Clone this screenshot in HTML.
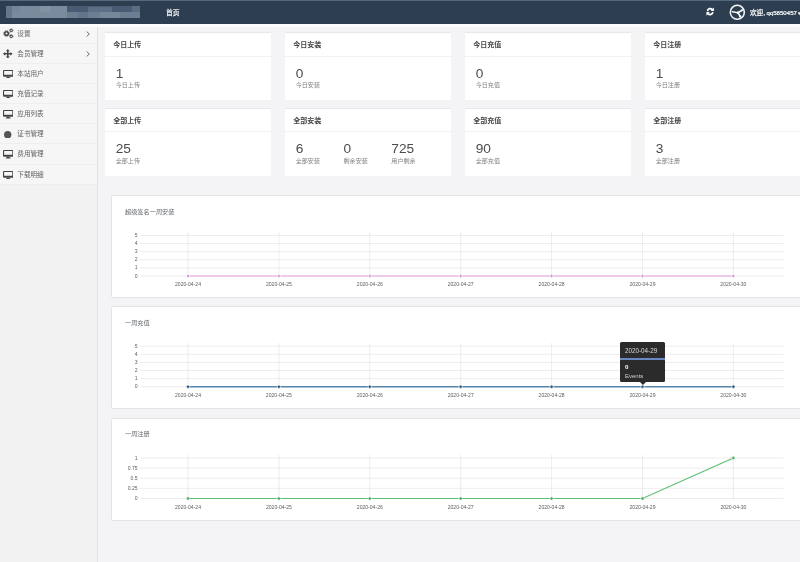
<!DOCTYPE html><html lang="zh"><head><meta charset="utf-8"><title>首页</title><style>
html,body{margin:0;padding:0;}
body{width:800px;height:562px;overflow:hidden;background:#f4f4f6;font-family:"Liberation Sans", "Noto Sans CJK SC", sans-serif;position:relative;}
.abs{position:absolute;}
#wrap{position:absolute;left:0;top:0;width:800px;height:562px;overflow:hidden;will-change:transform;}
#hdr{left:0;top:0;width:800px;height:23.6px;background:#2c3e50;}
#side{left:0;top:24px;width:98px;height:538px;background:#f2f2f2;border-right:1px solid #e1e1e1;box-sizing:border-box;}
.si{position:absolute;left:0;width:97px;height:20.15px;border-bottom:1px solid #eeeeee;box-sizing:border-box;background:#f6f6f6;}
.si span{position:absolute;left:17.3px;top:0;line-height:19px;font-size:6.6px;color:#646464;white-space:nowrap;}
.si svg{position:absolute;}
.card{position:absolute;background:#fff;border-radius:1px;}
.card .tb{position:absolute;left:0;right:0;top:-0.9px;height:1px;background:#e6e8ea;}
.card .t{position:absolute;left:8.3px;top:0;height:23.8px;line-height:23.8px;font-size:7px;font-weight:bold;color:#464646;white-space:nowrap;}
.card .ln{position:absolute;left:0;right:0;top:22.7px;height:1px;background:#f1f1f1;}
.card .n{position:absolute;font-size:13.7px;line-height:14px;color:#4c4c4c;white-space:nowrap;}
.card .l{position:absolute;font-size:6.1px;line-height:8px;color:#808080;white-space:nowrap;}
.panel{position:absolute;left:112px;width:700px;background:#fff;box-shadow:0 0 0 1px #e4e4e5;border-radius:1px;}
.panel .pt{position:absolute;left:13px;font-size:6.2px;color:#666b70;line-height:8px;white-space:nowrap;}
svg text{font-family:"Liberation Sans", "Noto Sans CJK SC", sans-serif;}
</style></head><body>
<div id="wrap">
<div id="hdr" class="abs">
<div class="abs" style="left:6px;top:6.2px;width:60.5px;height:12px;background:#7a8b9d;"></div>
<div class="abs" style="left:6px;top:6.2px;width:6px;height:12px;background:#64778b;"></div>
<div class="abs" style="left:12px;top:6.2px;width:8px;height:6px;background:#74869a;"></div>
<div class="abs" style="left:40px;top:6.2px;width:10px;height:6px;background:#8292a3;"></div>
<div class="abs" style="left:66.5px;top:12px;width:73.5px;height:6.2px;background:#6c7e91;"></div>
<div class="abs" style="left:66.5px;top:6.2px;width:73.5px;height:5.8px;background:#485b72;"></div>
<div class="abs" style="left:88px;top:7px;width:24px;height:5px;background:#5c6f84;"></div>
<div class="abs" style="left:100px;top:12px;width:20px;height:6.2px;background:#76879a;"></div>
<div class="abs" style="left:132px;top:6.2px;width:8px;height:5.8px;background:#5a6d82;"></div>
<div class="abs" style="left:78px;top:12px;width:10px;height:6.2px;background:#62758a;"></div>
<div class="abs" style="left:0;top:0;width:800px;height:0.8px;background:#56687c;"></div>
<div class="abs" style="left:0;top:23.6px;width:800px;height:3px;background:#fbfcfb;z-index:5;"></div>
<div class="abs" style="left:166px;top:0.6px;line-height:24px;font-size:6.8px;color:#fff;white-space:nowrap;-webkit-text-stroke:0.2px #fff;">首页</div>
<svg class="abs" style="left:706.4px;top:7.1px" width="8.4" height="9.2" viewBox="0 0 18 18" preserveAspectRatio="none"><g fill="none" stroke="#fff" stroke-width="3.6"><path d="M3.2 8 A6 6 0 0 1 13.6 5.2"/><path d="M14.8 10 A6 6 0 0 1 4.4 12.8"/></g><path d="M17 1 V8 H10 Z" fill="#fff"/><path d="M1 17 V10 H8 Z" fill="#fff"/></svg>
<svg class="abs" style="left:728.9px;top:4.4px" width="16.6" height="16.6" viewBox="0 0 33.2 33.2"><circle cx="16.6" cy="16.6" r="14" fill="#2c3e50" stroke="#f4f6f8" stroke-width="3"/><g stroke="#f4f6f8" stroke-width="3" stroke-linecap="round" fill="#f4f6f8"><line x1="6.5" y1="15.5" x2="18" y2="17.5"/><line x1="18" y1="17.5" x2="26" y2="12.5"/><line x1="18" y1="17.5" x2="22.5" y2="25"/><circle cx="18" cy="17.5" r="2.6" stroke="none"/><circle cx="22.5" cy="25" r="2.4" stroke="none"/><circle cx="26" cy="12.5" r="2" stroke="none"/></g></svg>
<div class="abs" style="left:750px;top:0.6px;line-height:24.5px;font-size:6.6px;color:#fff;white-space:nowrap;-webkit-text-stroke:0.2px #fff;">欢迎,<span style="font-size:6.1px;margin-left:1.4px">qq5850457</span><span style="font-size:5px;margin-left:0.8px">&#9662;</span></div>
</div>
<div id="side" class="abs">
<div class="si" style="top:-0.50px"><svg style="left:2.8px;top:4.6px" width="11" height="10.5" viewBox="0 0 22 21"><circle cx="7" cy="11" r="5.6" fill="none" stroke="#444" stroke-width="2" stroke-dasharray="2.2 2.2"/><circle cx="7" cy="11" r="3.6" fill="none" stroke="#444" stroke-width="3"/><circle cx="16.5" cy="4.8" r="2.3" fill="none" stroke="#555" stroke-width="2.2"/><circle cx="16.5" cy="4.8" r="3.6" fill="none" stroke="#555" stroke-width="1.2" stroke-dasharray="1.4 1.4"/><circle cx="16.5" cy="16.6" r="2.3" fill="none" stroke="#555" stroke-width="2.2"/><circle cx="16.5" cy="16.6" r="3.6" fill="none" stroke="#555" stroke-width="1.2" stroke-dasharray="1.4 1.4"/></svg><span>设置</span>
<svg style="left:85.5px;top:7px" width="4" height="6" viewBox="0 0 8 12"><path d="M1.5 1 L6.5 6 L1.5 11" fill="none" stroke="#606060" stroke-width="1.9"/></svg>
</div>
<div class="si" style="top:19.65px"><svg style="left:3.2px;top:5px" width="9.6" height="9.6" viewBox="0 0 18 18"><path d="M9 0 L12.6 4 H10.4 V7.6 H14 V5.4 L18 9 L14 12.6 V10.4 H10.4 V14 H12.6 L9 18 L5.4 14 H7.6 V10.4 H4 V12.6 L0 9 L4 5.4 V7.6 H7.6 V4 H5.4 Z" fill="#444"/></svg><span>会员管理</span>
<svg style="left:85.5px;top:7px" width="4" height="6" viewBox="0 0 8 12"><path d="M1.5 1 L6.5 6 L1.5 11" fill="none" stroke="#606060" stroke-width="1.9"/></svg>
</div>
<div class="si" style="top:39.80px"><svg style="left:2.9px;top:6.1px" width="10.4" height="8.4" viewBox="0 0 20.8 16.8"><path d="M2 0 H18.8 A2 2 0 0 1 20.8 2 V11.6 A2 2 0 0 1 18.8 13.6 H2 A2 2 0 0 1 0 11.6 V2 A2 2 0 0 1 2 0 Z M2.2 2 V9.4 H18.6 V2 Z" fill="#444" fill-rule="evenodd"/><path d="M8.2 13.4 H12.6 L13.2 15.2 H15 V16.8 H5.8 V15.2 H7.6 Z" fill="#444"/></svg><span>本站用户</span>
</div>
<div class="si" style="top:59.95px"><svg style="left:2.9px;top:6.1px" width="10.4" height="8.4" viewBox="0 0 20.8 16.8"><path d="M2 0 H18.8 A2 2 0 0 1 20.8 2 V11.6 A2 2 0 0 1 18.8 13.6 H2 A2 2 0 0 1 0 11.6 V2 A2 2 0 0 1 2 0 Z M2.2 2 V9.4 H18.6 V2 Z" fill="#444" fill-rule="evenodd"/><path d="M8.2 13.4 H12.6 L13.2 15.2 H15 V16.8 H5.8 V15.2 H7.6 Z" fill="#444"/></svg><span>充值记录</span>
</div>
<div class="si" style="top:80.10px"><svg style="left:2.9px;top:6.1px" width="10.4" height="8.4" viewBox="0 0 20.8 16.8"><path d="M2 0 H18.8 A2 2 0 0 1 20.8 2 V11.6 A2 2 0 0 1 18.8 13.6 H2 A2 2 0 0 1 0 11.6 V2 A2 2 0 0 1 2 0 Z M2.2 2 V9.4 H18.6 V2 Z" fill="#444" fill-rule="evenodd"/><path d="M8.2 13.4 H12.6 L13.2 15.2 H15 V16.8 H5.8 V15.2 H7.6 Z" fill="#444"/></svg><span>应用列表</span>
</div>
<div class="si" style="top:100.25px"><svg style="left:4.4px;top:6.6px" width="7.4" height="7.4" viewBox="0 0 14 14"><circle cx="7" cy="7" r="7" fill="#555"/></svg><span>证书管理</span>
</div>
<div class="si" style="top:120.40px"><svg style="left:2.9px;top:6.1px" width="10.4" height="8.4" viewBox="0 0 20.8 16.8"><path d="M2 0 H18.8 A2 2 0 0 1 20.8 2 V11.6 A2 2 0 0 1 18.8 13.6 H2 A2 2 0 0 1 0 11.6 V2 A2 2 0 0 1 2 0 Z M2.2 2 V9.4 H18.6 V2 Z" fill="#444" fill-rule="evenodd"/><path d="M8.2 13.4 H12.6 L13.2 15.2 H15 V16.8 H5.8 V15.2 H7.6 Z" fill="#444"/></svg><span>费用管理</span>
</div>
<div class="si" style="top:140.55px"><svg style="left:2.9px;top:6.1px" width="10.4" height="8.4" viewBox="0 0 20.8 16.8"><path d="M2 0 H18.8 A2 2 0 0 1 20.8 2 V11.6 A2 2 0 0 1 18.8 13.6 H2 A2 2 0 0 1 0 11.6 V2 A2 2 0 0 1 2 0 Z M2.2 2 V9.4 H18.6 V2 Z" fill="#444" fill-rule="evenodd"/><path d="M8.2 13.4 H12.6 L13.2 15.2 H15 V16.8 H5.8 V15.2 H7.6 Z" fill="#444"/></svg><span>下载明细</span>
</div>
</div>
<div class="card" style="left:105px;top:33.1px;width:165.5px;height:67.0px"><div class="tb"></div><div class="t">今日上传</div><div class="ln"></div>
<div class="n" style="left:10.7px;top:33.6px">1</div><div class="l" style="left:10.7px;top:48.2px">今日上传</div>
</div>
<div class="card" style="left:285px;top:33.1px;width:165.5px;height:67.0px"><div class="tb"></div><div class="t">今日安装</div><div class="ln"></div>
<div class="n" style="left:10.7px;top:33.6px">0</div><div class="l" style="left:10.7px;top:48.2px">今日安装</div>
</div>
<div class="card" style="left:465px;top:33.1px;width:165.5px;height:67.0px"><div class="tb"></div><div class="t">今日充值</div><div class="ln"></div>
<div class="n" style="left:10.7px;top:33.6px">0</div><div class="l" style="left:10.7px;top:48.2px">今日充值</div>
</div>
<div class="card" style="left:645px;top:33.1px;width:165.5px;height:67.0px"><div class="tb"></div><div class="t">今日注册</div><div class="ln"></div>
<div class="n" style="left:10.7px;top:33.6px">1</div><div class="l" style="left:10.7px;top:48.2px">今日注册</div>
</div>
<div class="card" style="left:105px;top:108.8px;width:165.5px;height:66.9px"><div class="tb"></div><div class="t">全部上传</div><div class="ln"></div>
<div class="n" style="left:10.7px;top:33.6px">25</div><div class="l" style="left:10.7px;top:48.2px">全部上传</div>
</div>
<div class="card" style="left:285px;top:108.8px;width:165.5px;height:66.9px"><div class="tb"></div><div class="t">全部安装</div><div class="ln"></div>
<div class="n" style="left:10.7px;top:33.6px">6</div><div class="l" style="left:10.7px;top:48.2px">全部安装</div>
<div class="n" style="left:58.5px;top:33.6px">0</div><div class="l" style="left:58.5px;top:48.2px">剩余安装</div>
<div class="n" style="left:106.3px;top:33.6px">725</div><div class="l" style="left:106.3px;top:48.2px">用户剩余</div>
</div>
<div class="card" style="left:465px;top:108.8px;width:165.5px;height:66.9px"><div class="tb"></div><div class="t">全部充值</div><div class="ln"></div>
<div class="n" style="left:10.7px;top:33.6px">90</div><div class="l" style="left:10.7px;top:48.2px">全部充值</div>
</div>
<div class="card" style="left:645px;top:108.8px;width:165.5px;height:66.9px"><div class="tb"></div><div class="t">全部注册</div><div class="ln"></div>
<div class="n" style="left:10.7px;top:33.6px">3</div><div class="l" style="left:10.7px;top:48.2px">全部注册</div>
</div>
<div class="panel" style="top:195.8px;height:101.20px"><div class="pt" style="top:12.00px">超级签名一周安装</div><svg class="abs" style="left:0;top:0" width="700" height="101.20" viewBox="0 0 700 101.20"><line x1="28" y1="39.45" x2="671.6" y2="39.45" stroke="#e0e0e0" stroke-width="0.6"/><text x="25.6" y="41.05" font-size="5.1" fill="#5c5f5a" text-anchor="end">5</text><line x1="28" y1="47.56" x2="671.6" y2="47.56" stroke="#e0e0e0" stroke-width="0.6"/><text x="25.6" y="49.16" font-size="5.1" fill="#5c5f5a" text-anchor="end">4</text><line x1="28" y1="55.67" x2="671.6" y2="55.67" stroke="#e0e0e0" stroke-width="0.6"/><text x="25.6" y="57.27" font-size="5.1" fill="#5c5f5a" text-anchor="end">3</text><line x1="28" y1="63.78" x2="671.6" y2="63.78" stroke="#e0e0e0" stroke-width="0.6"/><text x="25.6" y="65.38" font-size="5.1" fill="#5c5f5a" text-anchor="end">2</text><line x1="28" y1="71.89" x2="671.6" y2="71.89" stroke="#e0e0e0" stroke-width="0.6"/><text x="25.6" y="73.49" font-size="5.1" fill="#5c5f5a" text-anchor="end">1</text><line x1="28" y1="80.00" x2="671.6" y2="80.00" stroke="#e0e0e0" stroke-width="0.6"/><text x="25.6" y="81.60" font-size="5.1" fill="#5c5f5a" text-anchor="end">0</text><line x1="76.00" y1="36.25" x2="76.00" y2="82.20" stroke="#e0e0e0" stroke-width="0.6"/><text x="76.00" y="90.20" font-size="5.1" fill="#5c5f5a" text-anchor="middle">2020-04-24</text><line x1="166.90" y1="36.25" x2="166.90" y2="82.20" stroke="#e0e0e0" stroke-width="0.6"/><text x="166.90" y="90.20" font-size="5.1" fill="#5c5f5a" text-anchor="middle">2020-04-25</text><line x1="257.80" y1="36.25" x2="257.80" y2="82.20" stroke="#e0e0e0" stroke-width="0.6"/><text x="257.80" y="90.20" font-size="5.1" fill="#5c5f5a" text-anchor="middle">2020-04-26</text><line x1="348.70" y1="36.25" x2="348.70" y2="82.20" stroke="#e0e0e0" stroke-width="0.6"/><text x="348.70" y="90.20" font-size="5.1" fill="#5c5f5a" text-anchor="middle">2020-04-27</text><line x1="439.60" y1="36.25" x2="439.60" y2="82.20" stroke="#e0e0e0" stroke-width="0.6"/><text x="439.60" y="90.20" font-size="5.1" fill="#5c5f5a" text-anchor="middle">2020-04-28</text><line x1="530.50" y1="36.25" x2="530.50" y2="82.20" stroke="#e0e0e0" stroke-width="0.6"/><text x="530.50" y="90.20" font-size="5.1" fill="#5c5f5a" text-anchor="middle">2020-04-29</text><line x1="621.40" y1="36.25" x2="621.40" y2="82.20" stroke="#e0e0e0" stroke-width="0.6"/><text x="621.40" y="90.20" font-size="5.1" fill="#5c5f5a" text-anchor="middle">2020-04-30</text><path d="M76.00 80.00 L166.90 80.00 L257.80 80.00 L348.70 80.00 L439.60 80.00 L530.50 80.00 L621.40 80.00" fill="none" stroke="#edbde6" stroke-width="1.3"/><circle cx="76.00" cy="80.00" r="1.5" fill="#c690c4" stroke="#fff" stroke-width="0.7"/><circle cx="166.90" cy="80.00" r="1.5" fill="#c690c4" stroke="#fff" stroke-width="0.7"/><circle cx="257.80" cy="80.00" r="1.5" fill="#c690c4" stroke="#fff" stroke-width="0.7"/><circle cx="348.70" cy="80.00" r="1.5" fill="#c690c4" stroke="#fff" stroke-width="0.7"/><circle cx="439.60" cy="80.00" r="1.5" fill="#c690c4" stroke="#fff" stroke-width="0.7"/><circle cx="530.50" cy="80.00" r="1.5" fill="#c690c4" stroke="#fff" stroke-width="0.7"/><circle cx="621.40" cy="80.00" r="1.5" fill="#c690c4" stroke="#fff" stroke-width="0.7"/></svg></div>
<div class="panel" style="top:307.3px;height:101.00px"><div class="pt" style="top:11.75px">一周充值</div><svg class="abs" style="left:0;top:0" width="700" height="101.00" viewBox="0 0 700 101.00"><line x1="28" y1="39.20" x2="671.6" y2="39.20" stroke="#e0e0e0" stroke-width="0.6"/><text x="25.6" y="40.80" font-size="5.1" fill="#5c5f5a" text-anchor="end">5</text><line x1="28" y1="47.31" x2="671.6" y2="47.31" stroke="#e0e0e0" stroke-width="0.6"/><text x="25.6" y="48.91" font-size="5.1" fill="#5c5f5a" text-anchor="end">4</text><line x1="28" y1="55.42" x2="671.6" y2="55.42" stroke="#e0e0e0" stroke-width="0.6"/><text x="25.6" y="57.02" font-size="5.1" fill="#5c5f5a" text-anchor="end">3</text><line x1="28" y1="63.53" x2="671.6" y2="63.53" stroke="#e0e0e0" stroke-width="0.6"/><text x="25.6" y="65.13" font-size="5.1" fill="#5c5f5a" text-anchor="end">2</text><line x1="28" y1="71.64" x2="671.6" y2="71.64" stroke="#e0e0e0" stroke-width="0.6"/><text x="25.6" y="73.24" font-size="5.1" fill="#5c5f5a" text-anchor="end">1</text><line x1="28" y1="79.75" x2="671.6" y2="79.75" stroke="#e0e0e0" stroke-width="0.6"/><text x="25.6" y="81.35" font-size="5.1" fill="#5c5f5a" text-anchor="end">0</text><line x1="76.00" y1="36.00" x2="76.00" y2="81.95" stroke="#e0e0e0" stroke-width="0.6"/><text x="76.00" y="89.95" font-size="5.1" fill="#5c5f5a" text-anchor="middle">2020-04-24</text><line x1="166.90" y1="36.00" x2="166.90" y2="81.95" stroke="#e0e0e0" stroke-width="0.6"/><text x="166.90" y="89.95" font-size="5.1" fill="#5c5f5a" text-anchor="middle">2020-04-25</text><line x1="257.80" y1="36.00" x2="257.80" y2="81.95" stroke="#e0e0e0" stroke-width="0.6"/><text x="257.80" y="89.95" font-size="5.1" fill="#5c5f5a" text-anchor="middle">2020-04-26</text><line x1="348.70" y1="36.00" x2="348.70" y2="81.95" stroke="#e0e0e0" stroke-width="0.6"/><text x="348.70" y="89.95" font-size="5.1" fill="#5c5f5a" text-anchor="middle">2020-04-27</text><line x1="439.60" y1="36.00" x2="439.60" y2="81.95" stroke="#e0e0e0" stroke-width="0.6"/><text x="439.60" y="89.95" font-size="5.1" fill="#5c5f5a" text-anchor="middle">2020-04-28</text><line x1="530.50" y1="36.00" x2="530.50" y2="81.95" stroke="#e0e0e0" stroke-width="0.6"/><text x="530.50" y="89.95" font-size="5.1" fill="#5c5f5a" text-anchor="middle">2020-04-29</text><line x1="621.40" y1="36.00" x2="621.40" y2="81.95" stroke="#e0e0e0" stroke-width="0.6"/><text x="621.40" y="89.95" font-size="5.1" fill="#5c5f5a" text-anchor="middle">2020-04-30</text><path d="M76.00 79.75 L166.90 79.75 L257.80 79.75 L348.70 79.75 L439.60 79.75 L530.50 79.75 L621.40 79.75" fill="none" stroke="#5585ab" stroke-width="1.4"/><circle cx="76.00" cy="79.75" r="1.7" fill="#2f5878" stroke="#fff" stroke-width="0.7"/><circle cx="166.90" cy="79.75" r="1.7" fill="#2f5878" stroke="#fff" stroke-width="0.7"/><circle cx="257.80" cy="79.75" r="1.7" fill="#2f5878" stroke="#fff" stroke-width="0.7"/><circle cx="348.70" cy="79.75" r="1.7" fill="#2f5878" stroke="#fff" stroke-width="0.7"/><circle cx="439.60" cy="79.75" r="1.7" fill="#2f5878" stroke="#fff" stroke-width="0.7"/><circle cx="530.50" cy="79.75" r="1.7" fill="#2f5878" stroke="#fff" stroke-width="0.7"/><circle cx="621.40" cy="79.75" r="1.7" fill="#2f5878" stroke="#fff" stroke-width="0.7"/></svg><div class="abs" style="left:508px;top:35.15px;width:45px;height:39.2px;background:#2b2b2b;border-radius:1.5px;"><div class="abs" style="left:5px;top:4.6px;font-size:6.3px;line-height:8px;color:#d8dbe2;white-space:nowrap;">2020-04-29</div><div class="abs" style="left:0;top:16px;width:45px;height:1.5px;background:#6a86c4;"></div><div class="abs" style="left:5px;top:20.3px;font-size:6.2px;line-height:8px;color:#fff;font-weight:bold;white-space:nowrap;">0</div><div class="abs" style="left:5px;top:29.3px;font-size:6px;line-height:8px;color:#d0d0d0;white-space:nowrap;">Events</div><div class="abs" style="left:19.5px;top:39.2px;width:0;height:0;border-left:3px solid transparent;border-right:3px solid transparent;border-top:3px solid #2b2b2b;"></div></div></div>
<div class="panel" style="top:418.6px;height:101.10px"><div class="pt" style="top:11.50px">一周注册</div><svg class="abs" style="left:0;top:0" width="700" height="101.10" viewBox="0 0 700 101.10"><line x1="28" y1="38.95" x2="671.6" y2="38.95" stroke="#e0e0e0" stroke-width="0.6"/><text x="25.6" y="40.55" font-size="5.1" fill="#5c5f5a" text-anchor="end">1</text><line x1="28" y1="49.09" x2="671.6" y2="49.09" stroke="#e0e0e0" stroke-width="0.6"/><text x="25.6" y="50.69" font-size="5.1" fill="#5c5f5a" text-anchor="end">0.75</text><line x1="28" y1="59.23" x2="671.6" y2="59.23" stroke="#e0e0e0" stroke-width="0.6"/><text x="25.6" y="60.83" font-size="5.1" fill="#5c5f5a" text-anchor="end">0.5</text><line x1="28" y1="69.36" x2="671.6" y2="69.36" stroke="#e0e0e0" stroke-width="0.6"/><text x="25.6" y="70.96" font-size="5.1" fill="#5c5f5a" text-anchor="end">0.25</text><line x1="28" y1="79.50" x2="671.6" y2="79.50" stroke="#e0e0e0" stroke-width="0.6"/><text x="25.6" y="81.10" font-size="5.1" fill="#5c5f5a" text-anchor="end">0</text><line x1="76.00" y1="35.75" x2="76.00" y2="81.70" stroke="#e0e0e0" stroke-width="0.6"/><text x="76.00" y="89.70" font-size="5.1" fill="#5c5f5a" text-anchor="middle">2020-04-24</text><line x1="166.90" y1="35.75" x2="166.90" y2="81.70" stroke="#e0e0e0" stroke-width="0.6"/><text x="166.90" y="89.70" font-size="5.1" fill="#5c5f5a" text-anchor="middle">2020-04-25</text><line x1="257.80" y1="35.75" x2="257.80" y2="81.70" stroke="#e0e0e0" stroke-width="0.6"/><text x="257.80" y="89.70" font-size="5.1" fill="#5c5f5a" text-anchor="middle">2020-04-26</text><line x1="348.70" y1="35.75" x2="348.70" y2="81.70" stroke="#e0e0e0" stroke-width="0.6"/><text x="348.70" y="89.70" font-size="5.1" fill="#5c5f5a" text-anchor="middle">2020-04-27</text><line x1="439.60" y1="35.75" x2="439.60" y2="81.70" stroke="#e0e0e0" stroke-width="0.6"/><text x="439.60" y="89.70" font-size="5.1" fill="#5c5f5a" text-anchor="middle">2020-04-28</text><line x1="530.50" y1="35.75" x2="530.50" y2="81.70" stroke="#e0e0e0" stroke-width="0.6"/><text x="530.50" y="89.70" font-size="5.1" fill="#5c5f5a" text-anchor="middle">2020-04-29</text><line x1="621.40" y1="35.75" x2="621.40" y2="81.70" stroke="#e0e0e0" stroke-width="0.6"/><text x="621.40" y="89.70" font-size="5.1" fill="#5c5f5a" text-anchor="middle">2020-04-30</text><path d="M76.00 79.50 L166.90 79.50 L257.80 79.50 L348.70 79.50 L439.60 79.50 L530.50 79.50 L621.40 38.95" fill="none" stroke="#5cbf72" stroke-width="1.15"/><circle cx="76.00" cy="79.50" r="1.7" fill="#4aa860" stroke="#fff" stroke-width="0.7"/><circle cx="166.90" cy="79.50" r="1.7" fill="#4aa860" stroke="#fff" stroke-width="0.7"/><circle cx="257.80" cy="79.50" r="1.7" fill="#4aa860" stroke="#fff" stroke-width="0.7"/><circle cx="348.70" cy="79.50" r="1.7" fill="#4aa860" stroke="#fff" stroke-width="0.7"/><circle cx="439.60" cy="79.50" r="1.7" fill="#4aa860" stroke="#fff" stroke-width="0.7"/><circle cx="530.50" cy="79.50" r="1.7" fill="#4aa860" stroke="#fff" stroke-width="0.7"/><circle cx="621.40" cy="38.95" r="1.7" fill="#4aa860" stroke="#fff" stroke-width="0.7"/></svg></div>
</div>
</body></html>
